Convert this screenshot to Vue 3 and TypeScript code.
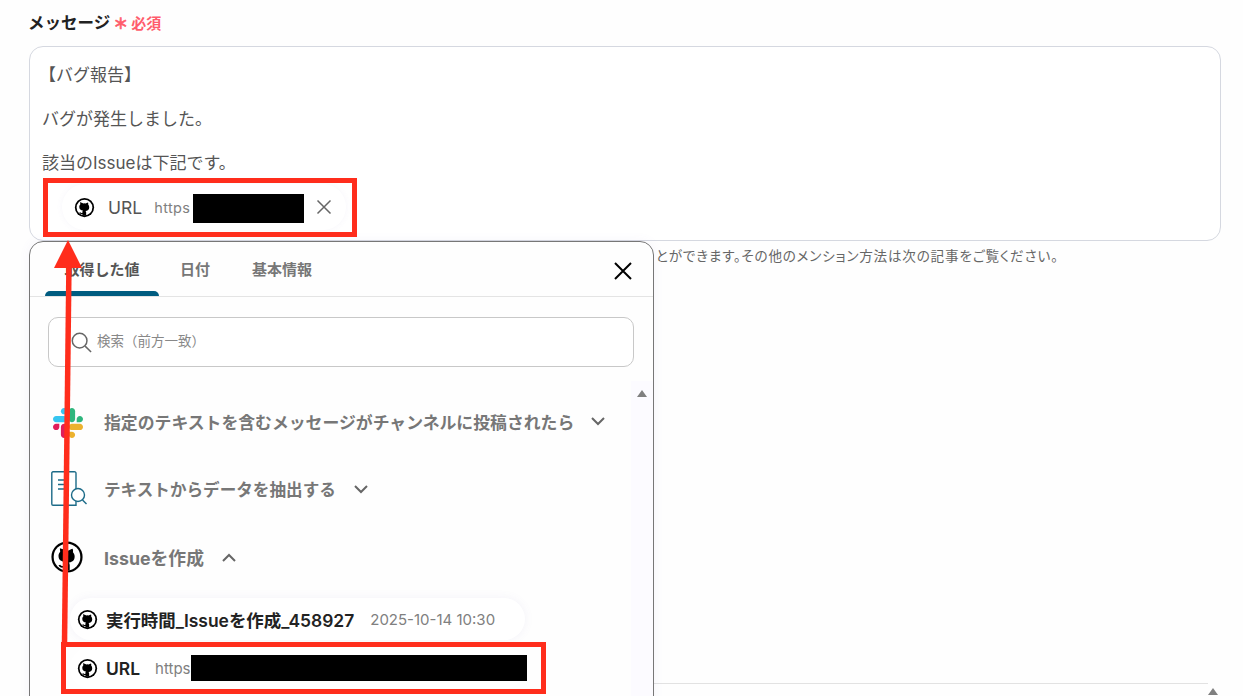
<script setup lang="ts">
const tabs = ['取得した値', '日付', '基本情報']
const gh = 'M8 6.200c1 .1 2.100.7 2.800 1.200a6 6 0 0 1 2.400 0c.7-.5 1.800-1.100 2.800-1.200.3.8.4 1.700.2 2.500.8.8 1.200 1.800 1.200 2.900 0 3-1.900 4-4.200 4.300.4.400.7 1 .7 1.700v3.700h-3.300v-.1H9.600v-1.800c-1.800.4-3-.3-3.600-1.600l1.200-.3c.5.8 1.300 1 2.400.7v-1.100c0-.6.200-1.200.6-1.600-2.300-.3-4.200-1.300-4.200-4.300 0-1.100.4-2.100 1.200-2.900-.2-.8-.1-1.700-.2-2.500z'
</script>

<template>
  <main class="page">
    <div class="label">
      <span class="label-text">メッセージ</span>
      <span class="star">＊</span>
      <span class="req">必須</span>
    </div>

    <section class="editor">
      <p class="first">【バグ報告】</p>
      <p>バグが発生しました。</p>
      <p>該当のIssueは下記です。</p>
      <div class="chip">
        <svg class="gh" viewBox="0 0 24 24">
          <circle cx="12" cy="12" r="11" fill="#000" />
          <circle cx="12" cy="12" r="9" fill="#fff" />
          <path :d="gh" fill="#000" />
        </svg>
        <span class="chip-name">URL</span>
        <span class="chip-val">https</span>
        <span class="redact redact-top"></span>
        <svg class="chip-x" viewBox="0 0 16 16">
          <path d="M1.500 1.500l13 13M14.500 1.500l-13 13" stroke="#666" stroke-width="1.500" fill="none" />
        </svg>
      </div>
    </section>

    <div class="hint">とができます。その他のメンション方法は次の記事をご覧ください。</div>

    <div class="lower-box">
      <span class="tri tri-lower"></span>
    </div>

    <aside class="popup">
      <header class="tabs">
        <button v-for="(t, i) in tabs" :key="t" class="tab" :class="{ active: i === 0 }">{{ t }}</button>
        <svg class="close" viewBox="0 0 20 20">
          <path d="M2 2l16 16M18 2L2 18" stroke="#000" stroke-width="2" fill="none" />
        </svg>
      </header>

      <div class="search">
        <svg class="search-icon" viewBox="0 0 24 24">
          <circle cx="10.500" cy="10.500" r="8" stroke="#666" stroke-width="1.600" fill="none" />
          <path d="M16.500 16.500L23 23" stroke="#666" stroke-width="1.600" fill="none" />
        </svg>
        <span class="search-text">検索（前方一致）</span>
      </div>

      <div class="scroll">
        <div class="track"><span class="tri"></span></div>

        <div class="group slack-row">
          <svg class="app-icon slack-icon" viewBox="0 0 122.800 122.800">
            <path d="M25.800 77.600c0 7.100-5.800 12.900-12.900 12.900S0 84.700 0 77.600s5.800-12.900 12.900-12.900h12.900v12.900z" fill="#E01E5A" />
            <path d="M32.300 77.600c0-7.100 5.800-12.900 12.900-12.900s12.900 5.800 12.900 12.900v32.300c0 7.100-5.800 12.900-12.900 12.900s-12.900-5.800-12.900-12.900V77.600z" fill="#E01E5A" />
            <path d="M45.200 25.800c-7.100 0-12.900-5.800-12.900-12.900S38.100 0 45.200 0s12.900 5.800 12.900 12.900v12.900H45.200z" fill="#36C5F0" />
            <path d="M45.200 32.300c7.100 0 12.900 5.800 12.900 12.900s-5.800 12.900-12.900 12.900H12.900C5.800 58.100 0 52.300 0 45.200s5.800-12.900 12.900-12.900h32.300z" fill="#36C5F0" />
            <path d="M97 45.200c0-7.100 5.800-12.900 12.900-12.900s12.900 5.800 12.900 12.900-5.800 12.900-12.900 12.900H97V45.200z" fill="#2EB67D" />
            <path d="M90.500 45.200c0 7.100-5.800 12.900-12.900 12.900s-12.900-5.800-12.900-12.900V12.900C64.700 5.800 70.500 0 77.600 0s12.900 5.800 12.900 12.900v32.300z" fill="#2EB67D" />
            <path d="M77.600 97c7.100 0 12.900 5.800 12.900 12.900s-5.800 12.900-12.900 12.900-12.900-5.800-12.900-12.900V97h12.900z" fill="#ECB22E" />
            <path d="M77.600 90.500c-7.100 0-12.900-5.800-12.900-12.900s5.800-12.900 12.900-12.900h32.300c7.100 0 12.900 5.800 12.900 12.900s-5.800 12.900-12.900 12.900H77.600z" fill="#ECB22E" />
          </svg>
          <span class="group-title title-slack">指定のテキストを含むメッセージがチャンネルに投稿されたら</span>
          <svg class="chev chev-slack" viewBox="0 0 14 9"><path d="M1 1l6 6 6-6" stroke="#666" stroke-width="2" fill="none" /></svg>
        </div>

        <div class="group">
          <svg class="app-icon doc" viewBox="0 0 36 36">
            <path d="M2 .8h21a1.500 1.500 0 0 1 2 1.500V34.200H2A1.200 1.200 0 0 1 .8 33V2A1.200 1.200 0 0 1 2 .8z" fill="#fff" stroke="#1c6b88" stroke-width="1.400" />
            <path d="M7 9h11M7 13.500h11M7 18h8" stroke="#1c6b88" stroke-width="1.300" fill="none" />
            <circle cx="27" cy="24" r="6.500" fill="#fff" stroke="#1c6b88" stroke-width="1.400" />
            <path d="M31.500 29l4 4" stroke="#1c6b88" stroke-width="1.400" fill="none" />
          </svg>
          <span class="group-title title-doc">テキストからデータを抽出する</span>
          <svg class="chev" viewBox="0 0 14 9"><path d="M1 1l6 6 6-6" stroke="#666" stroke-width="2" fill="none" /></svg>
        </div>

        <div class="group">
          <svg class="app-icon gh-big" viewBox="0 0 24 24">
            <circle cx="12" cy="12" r="11" fill="#000" />
            <circle cx="12" cy="12" r="9.400" fill="#fff" />
            <path :d="gh" fill="#000" />
          </svg>
          <span class="group-title title-issue">Issueを作成</span>
          <svg class="chev" viewBox="0 0 14 9"><path d="M1 8l6-6 6 6" stroke="#666" stroke-width="2" fill="none" /></svg>
        </div>

        <div class="item item-shadow">
          <svg class="gh item-gh" viewBox="0 0 24 24">
            <circle cx="12" cy="12" r="11" fill="#000" />
            <circle cx="12" cy="12" r="9" fill="#fff" />
            <path :d="gh" fill="#000" />
          </svg>
          <span class="item-name">実行時間_Issueを作成_458927</span>
          <span class="item-val">2025-10-14 10:30</span>
        </div>

        <div class="item">
          <svg class="gh item-gh" viewBox="0 0 24 24">
            <circle cx="12" cy="12" r="11" fill="#000" />
            <circle cx="12" cy="12" r="9" fill="#fff" />
            <path :d="gh" fill="#000" />
          </svg>
          <span class="item-name">URL</span>
          <span class="item-val url-val">https</span>
          <span class="redact redact-bottom"></span>
        </div>
      </div>
    </aside>

    <div class="mark mark-top"></div>
    <div class="mark mark-bottom"></div>
    <svg class="arrow" viewBox="0 0 1243 696">
      <path d="M69 262L64.500 643" stroke="#ff2d1c" stroke-width="5.500" fill="none" />
      <path d="M68 240L82 268H54z" fill="#ff2d1c" />
    </svg>
  </main>
</template>

<style scoped>
.page {
  position: relative;
  box-sizing: border-box;
  width: 1243px;
  height: 696px;
  overflow: hidden;
  padding: 14px 22px 0 29px;
  background: #fefefe;
  color: #555;
  font-family: Inter, "Noto Sans CJK JP", sans-serif;
  font-size: 16px;
}
.label {
  display: flex;
  align-items: center;
  height: 18px;
  margin-left: -1px;
  line-height: 18px;
}
.label-text {
  color: #222;
  font-size: 16.500px;
  font-weight: 700;
}
.star {
  margin: 2px 0 0 3px;
  color: #ff5c6c;
  font-size: 15px;
  font-weight: 700;
  -webkit-text-stroke: 0.6px #ff5c6c;
}
.req {
  margin: 2px 0 0 3px;
  color: #ff5c6c;
  font-size: 15px;
  font-weight: 700;
}
.editor {
  box-sizing: border-box;
  height: 195px;
  margin-top: 14px;
  padding: 17px 12px 0;
  border: 1px solid #d5d8e0;
  border-radius: 14px;
  background: #fff;
}
.editor p {
  margin: 0 0 22px;
  color: #555;
  font-size: 17px;
  line-height: 22px;
}
.editor .first {
  margin-left: -3px;
}
.chip {
  display: flex;
  align-items: center;
  box-sizing: border-box;
  width: 284px;
  height: 46px;
  margin: -12px 0 0 20px;
  padding-left: 12px;
  border-radius: 23px;
  background: #fff;
  box-shadow: 0 0 6px rgba(120, 100, 180, 0.06);
}
.gh {
  flex: none;
  width: 21px;
  height: 21px;
}
.chip-name {
  margin-left: 13px;
  color: #555;
  font-size: 17.500px;
}
.chip-val {
  margin-left: 12px;
  color: #808080;
  font-size: 14.500px;
  letter-spacing: 0.4px;
}
.redact {
  flex: none;
  display: block;
  background: #000;
}
.redact-top {
  width: 111px;
  height: 29px;
  margin: 2px 0 0 3px;
}
.chip-x {
  width: 16px;
  height: 16px;
  margin-left: 12px;
}
.hint {
  margin-top: 5px;
  padding-left: 627px;
  color: #666;
  font-size: 13.600px;
  font-feature-settings: "palt";
  letter-spacing: 0.78px;
  line-height: 20px;
}
.lower-box {
  position: relative;
  height: 60px;
  margin: 417px 13px 0 0;
  border-top: 1px solid #e2e2e2;
}
.popup {
  position: absolute;
  left: 29px;
  top: 241px;
  box-sizing: border-box;
  width: 625px;
  height: 480px;
  border: 1px solid #777;
  border-radius: 14px 14px 0 0;
  background: #fefefe;
  box-shadow: 0 0 12px rgba(120, 100, 200, 0.06);
}
.tabs {
  position: relative;
  display: flex;
  height: 55px;
  padding-left: 15px;
  border-bottom: 1px solid #e4e4e4;
  box-sizing: border-box;
}
.tab {
  position: relative;
  box-sizing: border-box;
  height: 54px;
  margin: 0;
  padding: 0 21px 2px;
  border: 0;
  background: none;
  color: #777;
  font-family: inherit;
  font-size: 15px;
  font-weight: 700;
}
.tab.active {
  width: 114px;
  padding: 0 0 2px;
  color: #555;
}
.tab.active::after {
  content: "";
  position: absolute;
  left: 0;
  right: 0;
  bottom: 0;
  height: 5px;
  border-radius: 5px 5px 0 0;
  background: #005c80;
}
.close {
  position: absolute;
  right: 20px;
  top: 19px;
  width: 20px;
  height: 20px;
}
.search {
  display: flex;
  align-items: center;
  box-sizing: border-box;
  width: 586px;
  height: 50px;
  margin: 20px 0 0 18px;
  padding-left: 21px;
  border: 1px solid #c8c8c8;
  border-radius: 10px;
  background: #fff;
  color: #888;
  font-size: 13.500px;
}
.search-text {
  margin-top: -5px;
}
.search-icon {
  width: 22px;
  height: 22px;
  margin-right: 5px;
}
.scroll {
  position: relative;
  height: 330px;
  padding-top: 21px;
}
.track {
  position: absolute;
  right: 0;
  top: 14px;
  bottom: 0;
  width: 22px;
  display: flex;
  justify-content: center;
  padding-top: 9px;
  background: #fcfbff;
}
.tri {
  display: block;
  width: 0;
  height: 0;
  border-left: 5px solid transparent;
  border-right: 5px solid transparent;
  border-bottom: 7px solid #808080;
}
.tri-lower {
  position: absolute;
  right: -10px;
  top: 4px;
}
.group {
  display: flex;
  align-items: center;
  height: 68px;
  padding-left: 20px;
}
.slack-row {
  height: 67px;
}
.app-icon {
  flex: none;
  width: 30px;
  height: 30px;
  margin-left: 3px;
  margin-right: 21px;
}
.slack-icon {
  margin-top: 2px;
}
.doc {
  width: 36px;
  height: 36px;
  margin: 0 17px 0 1px;
}
.gh-big {
  width: 34px;
  height: 34px;
  margin: 0 20px 0 0;
}
.group-title {
  color: #777;
  font-weight: 700;
}
.title-slack {
  font-size: 16.850px;
}
.title-doc {
  font-size: 16.600px;
}
.title-issue {
  font-size: 17.800px;
}
.chev {
  width: 14px;
  height: 9px;
  margin-left: 18px;
}
.chev-slack {
  margin-left: 17px;
}
.item {
  display: flex;
  align-items: center;
  box-sizing: border-box;
  width: 455px;
  height: 42px;
  margin-left: 40px;
  padding-left: 7px;
  border-radius: 21px;
  background: #fff;
}
.item-shadow {
  margin-top: 7px;
  box-shadow: 0 0 10px rgba(120, 100, 180, 0.08);
}
.item + .item {
  margin-top: 7px;
}
.item-gh {
  margin-right: 8px;
}
.item-name {
  color: #222;
  font-size: 17.450px;
  font-weight: 600;
}
.item-val {
  margin-left: 16px;
  color: #808080;
  font-size: 15px;
}
.url-val {
  margin-left: 15px;
}
.redact-bottom {
  width: 336px;
  height: 26px;
  margin-left: 0;
}
.mark {
  position: absolute;
  box-sizing: border-box;
  border: 5px solid #ff2d1c;
}
.mark-top {
  left: 43px;
  top: 178px;
  width: 314px;
  height: 59px;
}
.mark-bottom {
  left: 61px;
  top: 642px;
  width: 485px;
  height: 52px;
}
.arrow {
  position: absolute;
  left: 0;
  top: 0;
  width: 1243px;
  height: 696px;
  pointer-events: none;
}
</style>
